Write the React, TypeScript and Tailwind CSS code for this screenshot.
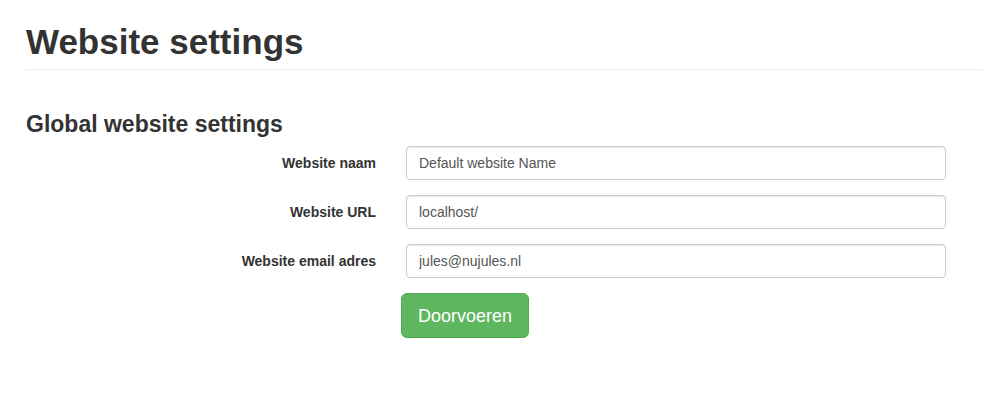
import type { ReactNode } from "react";

type FieldProps = { id: string; label: string; type: string; value: string };

function Field({ id, label, type, value }: FieldProps) {
  return (
    <Row>
      <label htmlFor={id} className="pr-[30px] text-right font-bold">
        {label}
      </label>
      <input
        id={id}
        name={id}
        type={type}
        defaultValue={value}
        className="h-[34px] w-full rounded border border-[#cccccc] bg-white px-3 text-[#555555] shadow-[inset_0_1px_1px_rgba(0,0,0,0.075)] outline-none focus:border-[#66afe9]"
      />
    </Row>
  );
}

function Row({ children }: { children: ReactNode }) {
  return <div className="grid grid-cols-[380fr_540fr] items-center">{children}</div>;
}

export default function App() {
  return (
    <main className="bg-white pl-[26px] font-['Liberation_Sans',Arial,sans-serif] text-sm leading-5 text-[#333333]">
      <header className="border-b border-[#eeeeee] pt-[22px] pb-[7px]">
        <h1 className="text-[35px] leading-10 font-bold">Website settings</h1>
      </header>
      <form className="pt-10 pr-[37px]" onSubmit={(event) => event.preventDefault()}>
        <h2 className="mb-2 text-[23px] leading-7 font-bold">Global website settings</h2>
        <div className="flex flex-col gap-[15px]">
          <Field id="site-name" label="Website naam" type="text" value="Default website Name" />
          <Field id="site-url" label="Website URL" type="text" value="localhost/" />
          <Field id="site-email" label="Website email adres" type="email" value="jules@nujules.nl" />
          <Row>
            <button
              type="submit"
              className="col-start-2 -ml-[5px] h-[45px] justify-self-start rounded-md border border-[#4cae4c] bg-[#5eb75f] px-4 text-lg leading-6 text-white"
            >
              Doorvoeren
            </button>
          </Row>
        </div>
      </form>
    </main>
  );
}
